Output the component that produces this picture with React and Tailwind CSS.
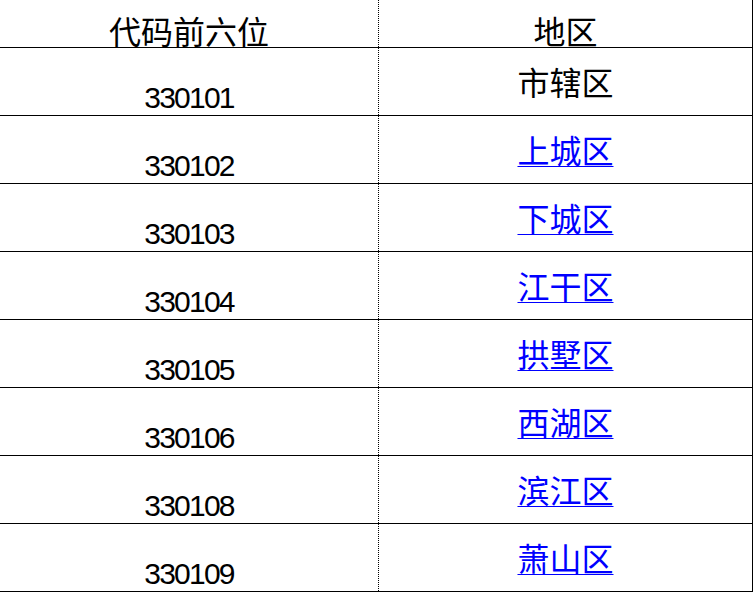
import React from 'react';

const ROWS = [
  { code: '330101', area: '市辖区', link: false },
  { code: '330102', area: '上城区', link: true },
  { code: '330103', area: '下城区', link: true },
  { code: '330104', area: '江干区', link: true },
  { code: '330105', area: '拱墅区', link: true },
  { code: '330106', area: '西湖区', link: true },
  { code: '330108', area: '滨江区', link: true },
  { code: '330109', area: '萧山区', link: true },
];

const cjk = "font-['Noto_Sans_CJK_SC',sans-serif]";

export default function App() {
  return (
    <div className="w-[755px] h-[592px] bg-white overflow-hidden text-black">
      <div className="w-[753px] border-r border-black">
        {/* header */}
        <div className="flex h-[48px] border-b border-black">
          <div className={`w-[379px] border-r border-dotted border-black flex items-end justify-center pb-[1px] text-[32px] leading-none ${cjk}`}>
            代码前六位
          </div>
          <div className={`flex-1 flex items-end justify-center pb-[1px] text-[32px] leading-none ${cjk}`}>
            地区
          </div>
        </div>

        {ROWS.map((r) => (
          <div key={r.code} className="flex h-[68px] border-b border-black">
            <div className="w-[379px] border-r border-dotted border-black flex items-end justify-center pb-[2px] text-[30px] leading-none font-['Liberation_Sans',sans-serif] tracking-[-1.8px]">
              {r.code}
            </div>
            <div className={`flex-1 flex items-center justify-center pb-[2px] text-[32px] leading-none ${cjk}`}>
              {r.link ? (
                <span className="text-[#0000ff] underline underline-offset-[3px] decoration-1">{r.area}</span>
              ) : (
                <span>{r.area}</span>
              )}
            </div>
          </div>
        ))}
      </div>
    </div>
  );
}
